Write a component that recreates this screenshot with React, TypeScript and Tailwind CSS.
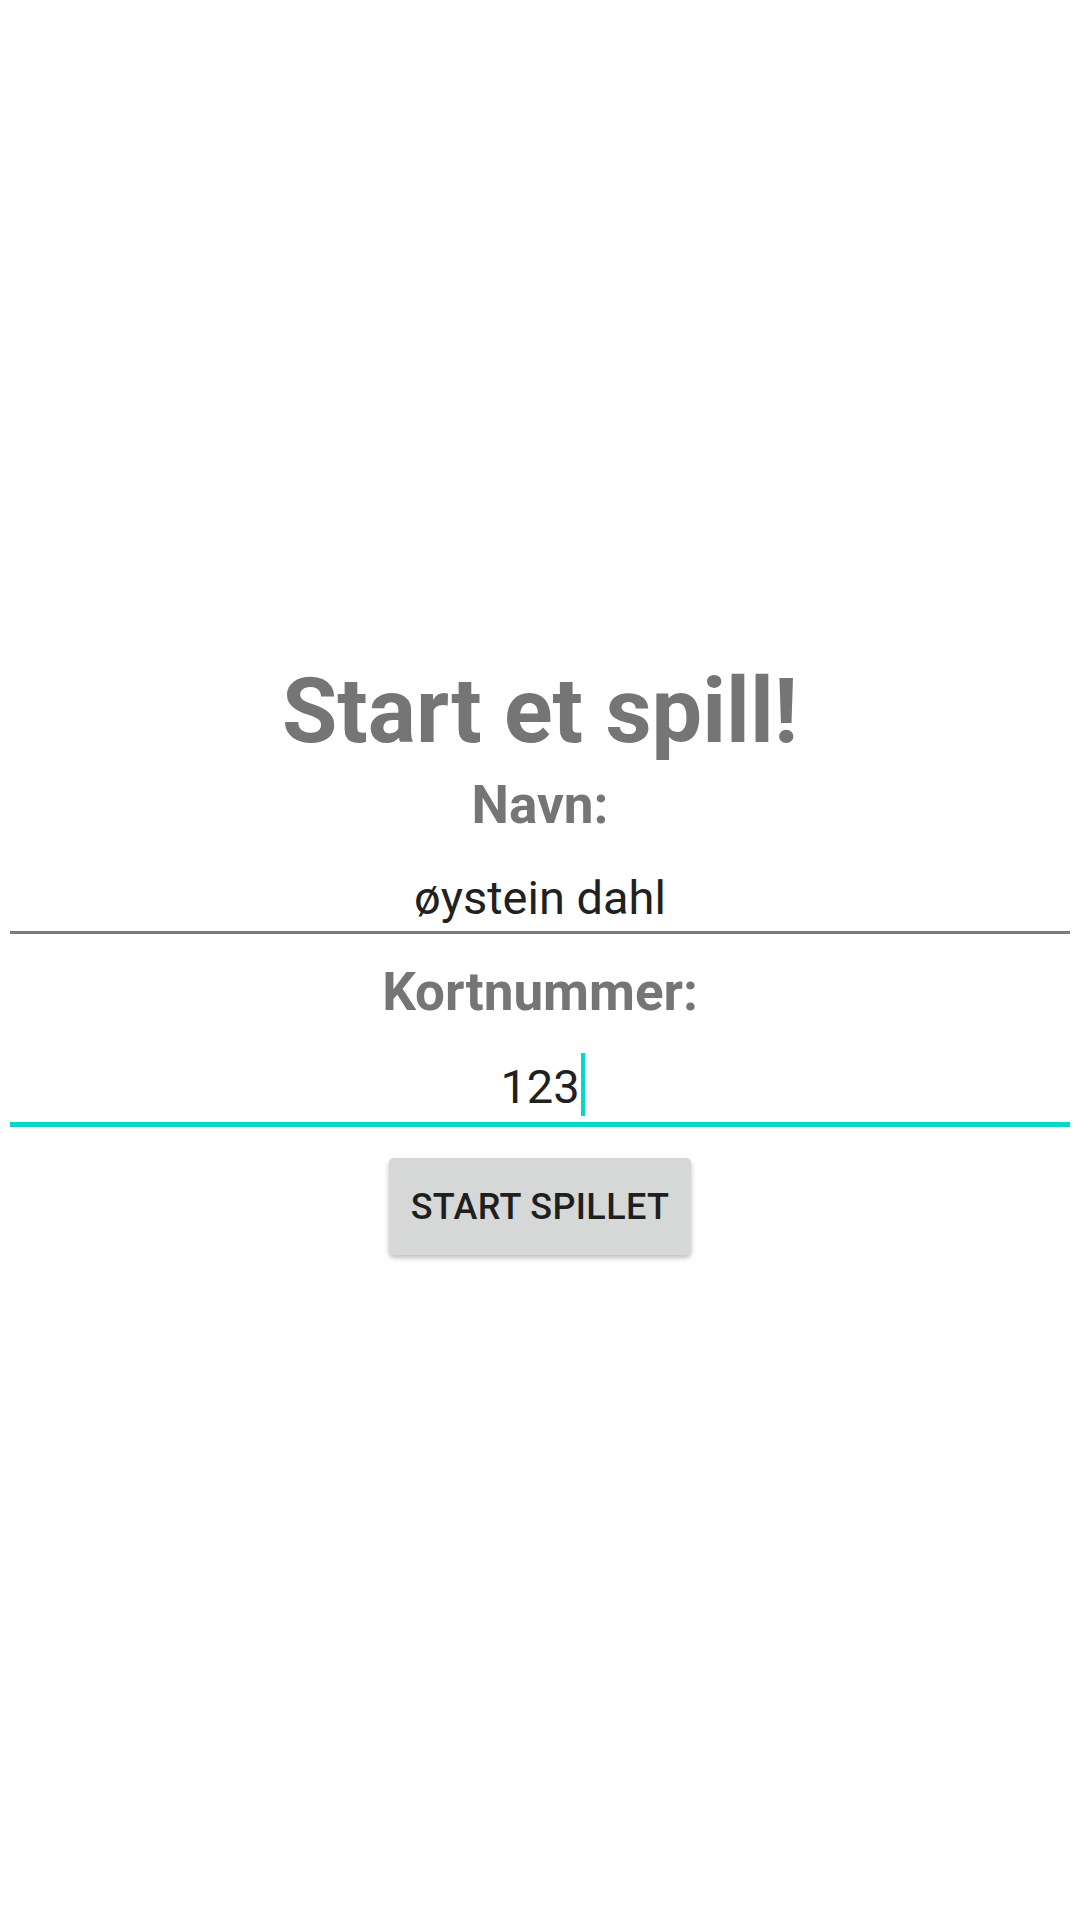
import React from "react";

const App: React.FC = () => {
  return (
    <div className="w-full h-[1920px] bg-white flex flex-col items-center font-['Roboto',sans-serif] pt-[667px]">
      {/* Title */}
      <h1 className="text-[90px] leading-none font-bold text-[#757575]">
        Start et spill!
      </h1>

      {/* Name field */}
      <label className="mt-[22px] text-[53px] leading-none font-bold text-[#757575]">
        Navn:
      </label>
      <div className="mt-[42px] w-[1060px] border-b-[3px] border-[#7a7a7a] pb-[10px] text-center text-[47px] leading-none text-[#212121]">
        øystein dahl
      </div>

      {/* Card number field, focused */}
      <label className="mt-[32px] text-[53px] leading-none font-bold text-[#757575]">
        Kortnummer:
      </label>
      <div className="mt-[44px] w-[1060px] border-b-[5px] border-[#03dac5] pb-[12px] text-center text-[47px] leading-none text-[#212121]">
        <span className="relative">
          123
          <span className="absolute left-full ml-[1px] top-[-6px] w-[4px] h-[63px] bg-[#03dac5]" />
        </span>
      </div>

      {/* Start button */}
      <button className="mt-[31px] w-[302px] h-[97px] rounded-[5px] bg-[#d6d7d7] shadow-[0_3px_5px_rgba(0,0,0,0.25)] text-[36px] font-medium tracking-[0.01em] text-[#1f1f1f] uppercase">
        Start spillet
      </button>
    </div>
  );
};

export default App;
